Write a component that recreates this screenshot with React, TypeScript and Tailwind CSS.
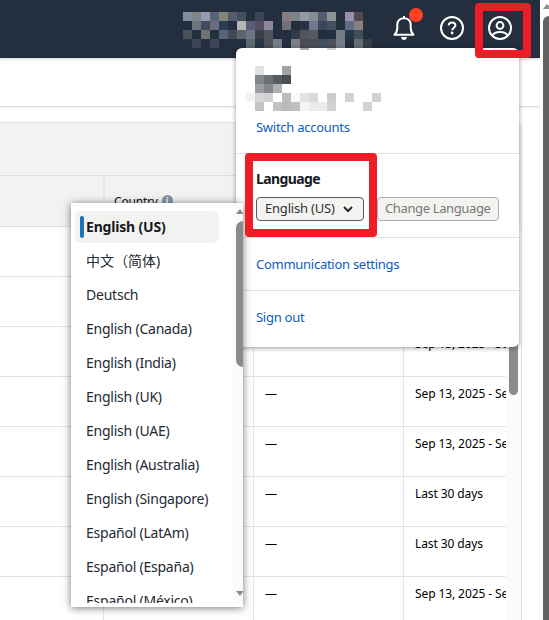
import React from "react";

const _ = "";

// Redacted seller name in the header, 9px cells
const headerMosaic: string[][] = [
  ["#7a909e", "#7d8788", "#9898b0", "#56657a", "#848579", "#565c6b", "#434e5f", _, "#3a4558", _, _, "#857b80", "#7b848b", "#9599a6", "#848d90", "#545c72", "#8c9396", _, "#9690ad", "#514b50", _],
  [_, "#6b757d", "#3f4a5b", "#6b6d80", "#2d3d55", "#262d42", "#b4b8b2", "#595e76", "#534e60", "#8f8599", _, "#746f79", _, "#2a3543", "#717791", "#3a465a", "#445060", _, "#626b86", "#85827f", _],
  ["#4a505a", _, "#6e7270", _, "#566476", "#414856", "#5f636c", "#6a7883", "#3b3f48", "#51545b", _, _, "#333b48", "#53535d", "#575861", _, _, "#727e84", "#26384a", "#434f58", _],
  [_, "#3c4655", _, "#3c4655", _, _, _, "#5d6b70", "#293647", "#4c5057", "#777e89", _, "#7a808a", "#4c4c56", "#4e4e57", "#445161", "#4e505a", "#777e89", _, "#666c75", "#363b45"],
];

const accountMosaic: string[][] = [
  [_, "#dfe1e3", _, _, "#a0a3a8", _, _, _, _, _, _, _, _, _, _],
  [_, "#84878a", "#6c6f73", "#585c62", "#484e55", _, _, _, _, _, _, _, _, _, _],
  [_, "#9a9da2", "#85878b", "#b0b0b4", _, _, _, _, _, _, _, _, _, _, _],
  ["#f2f2f2", "#d6d6d6", "#d1d1d3", _, "#bcbcbf", "#fafafa", "#e3e3e3", "#d9dbdb", _, "#cdcdcd", _, "#d3d3d3", _, _, "#d0d1d1"],
  [_, "#c3c4c7", _, "#c2c3c5", "#b9babd", "#bebfc1", "#f5f5f5", "#eaeaea", "#ececec", "#d1d1d2", _, _, _, "#d2d5d4", _],
];

function Mosaic({ rows }: { rows: string[][] }) {
  return (
    <div>
      {rows.map((row, y) => (
        <div key={y} className="flex">
          {row.map((color, x) => (
            <span key={x} className="size-[9px] shrink-0" style={{ backgroundColor: color || "transparent" }} />
          ))}
        </div>
      ))}
    </div>
  );
}

const languages = [
  "Deutsch",
  "English (Canada)",
  "English (India)",
  "English (UK)",
  "English (UAE)",
  "English (Australia)",
  "English (Singapore)",
  "Español (LatAm)",
  "Español (España)",
  "Español (México)",
];

const rows = ["", "", "Sep 13, 2025 - Sep 13", "Sep 13, 2025 - Sep 13", "Sep 13, 2025 - Sep 13", "Last 30 days", "Last 30 days", "Sep 13, 2025 - Sep 13"];

function Header() {
  return (
    <header className="flex h-[58px] items-start bg-[#232f3e] text-white shadow-[0_1px_3px_#0003]">
      <div className="ml-[183px] mt-3">
        <Mosaic rows={headerMosaic} />
      </div>
      <div className="relative ml-[20px] mt-[14px]">
        <svg width="24" height="28" viewBox="0 0 24 28" fill="none" stroke="currentColor" strokeWidth="2">
          <path d="M12 2v2M2.500 20.800h19c-2.200-2-2.800-3.700-2.800-7.200v-2.800c0-4-2.700-6.600-6.700-6.600s-6.700 2.600-6.700 6.600v2.800c0 3.500-.6 5.200-2.800 7.200Z" strokeLinejoin="round" />
          <path d="M9 23h6c-.3 2-1.400 3-3 3s-2.700-1-3-3Z" fill="currentColor" stroke="none" />
        </svg>
        <span className="absolute -top-[6px] left-[17px] size-[14px] rounded-full bg-[#ff4124]" />
      </div>
      <svg className="ml-[24px] mt-[16px]" width="24" height="24" viewBox="0 0 24 24" fill="none" stroke="currentColor" strokeWidth="2">
        <circle cx="12" cy="12" r="11" />
        <path d="M8.700 9.400C8.900 7.600 10.200 6.600 12 6.600c2 0 3.400 1.100 3.400 2.800 0 2.200-3.200 2.500-3.200 4.900" />
        <circle cx="12.100" cy="17" r="1.400" fill="currentColor" stroke="none" />
      </svg>
      <svg className="ml-[24px] mt-[16px]" width="24" height="24" viewBox="0 0 24 24" fill="none" stroke="currentColor" strokeWidth="2">
        <circle cx="12" cy="12" r="11" />
        <circle cx="12" cy="9.500" r="3.400" />
        <path d="M4.500 19.500c1.200-2.700 3.400-3.600 7.500-3.600s6.300.9 7.500 3.600" />
      </svg>
    </header>
  );
}

function ReportTable() {
  return (
    <main className="flex h-[498px] w-[522px] rounded-tr-md border-r border-t border-[#e4e4e4]">
      <div className="w-[506px] overflow-hidden">
        <div className="h-[53px] border-b border-[#dedede] bg-[#f2f2f2]" />
        <div className="flex h-[51px] border-b border-[#dedede] bg-[#f2f2f2]">
          <div className="w-[105px] border-r-2 border-[#e6e6e6]" />
          <div className="flex items-start gap-1 pl-[9px] pt-[16px] text-[#111]">
            <span className="text-[12px] leading-5 tracking-[-0.2px]">Country</span>
            <span className="mt-[3px] flex size-[11px] items-center justify-center rounded-full bg-[#8794a5] text-[9px] font-bold leading-none text-white">i</span>
          </div>
        </div>
        {rows.map((date, i) => (
          <div key={i} className="flex h-[50px] border-b border-[#e4e4e4] text-[12px] leading-5 text-black">
            <div className="w-[104px] border-r border-[#e4e4e4]" />
            <div className="w-[150px] border-r border-[#e4e4e4]" />
            <div className="w-[150px] border-r border-[#e4e4e4] pl-[11px] pt-[7px]">—</div>
            <div className="w-[102px] overflow-hidden whitespace-nowrap pl-[11px] pt-[7px] tracking-[-0.1px]">{i === 1 ? rows[2] : date}</div>
          </div>
        ))}
      </div>
      <div className="flex-1">
        <div className="h-[104px] bg-[#f0f0f0]" />
        <div className="h-[393px] bg-[#fbfbfb] pl-[3px]">
          <div className="h-[168px] w-[9px] rounded-b-full bg-[#8b8b8b]" />
        </div>
      </div>
    </main>
  );
}

function AccountMenu() {
  return (
    <section className="absolute left-[236px] top-[48px] h-[299px] w-[283px] rounded-md bg-white text-[13px] leading-5 tracking-[-0.27px] shadow-[0_1px_5px_#0006]">
      <div className="h-[106px] border-b border-[#e1e1e1] pl-[10px]">
        <div className="flex h-[18px] gap-[18px] pl-[54px]">
          <span className="h-[2px] w-[9px] bg-[#a8a8ae]" />
          <span className="h-[2px] w-[9px] bg-[#cfcfd2]" />
        </div>
        <Mosaic rows={accountMosaic} />
        <div className="ml-[10px] mt-[6px] text-[#0b5cc5]">Switch accounts</div>
      </div>
      <div className="h-[84px] border-b border-[#e1e1e1] pl-5 pt-[15px] text-[#16191f]">
        <h2 className="text-[14px] font-bold leading-5 tracking-[-0.6px]">Language</h2>
        <div className="mt-[8px] flex gap-[13px]">
          <button className="flex h-6 w-[108px] items-center justify-between rounded border border-[#545b64] bg-[#f4f3f0] pb-[2px] pl-2 pr-[10px] tracking-[-0.2px] text-[#30343a]">
            English (US)
            <svg className="mt-[2px]" width="10" height="8" viewBox="0 0 10 8" fill="none" stroke="#222a33" strokeWidth="2">
              <path d="m1 2 4 4 4-4" />
            </svg>
          </button>
          <button className="flex h-6 w-[122px] items-center whitespace-nowrap rounded border border-[#aaaeae] bg-[#f4f3f0] pb-[2px] pl-[7px] tracking-[-0.37px] text-[#747879]">
            Change Language
          </button>
        </div>
      </div>
      <div className="h-[53px] border-b border-[#e1e1e1] pl-5 pt-[16px] text-[#0b5cc5]">Communication settings</div>
      <div className="pl-5 pt-[16px] text-[#0b5cc5]">Sign out</div>
    </section>
  );
}

function LanguageList() {
  return (
    <section className="absolute left-[71px] top-[203px] flex h-[404px] w-[172px] bg-white shadow-[0_1px_8px_#0008]">
      <ul className="mt-2 h-[392px] w-[162px] overflow-hidden whitespace-nowrap pl-1 text-[14px] leading-5 text-[#232a33]">
        <li className="flex h-8 w-36 items-center gap-[2px] rounded-md bg-[#f2f2f0] pl-[5px] font-bold tracking-[-0.18px] text-[#16191f]">
          <span className="h-[22px] w-1 rounded-full bg-[#1d74b5]" />
          English (US)
        </li>
        <li className="flex h-[34px] items-center pl-[11px] pt-[2px]">中文（简体)</li>
        {languages.map((label) => (
          <li key={label} className="flex h-[34px] items-center pl-[11px] pt-[2px] tracking-[-0.23px]">
            {label}
          </li>
        ))}
      </ul>
      <div className="mb-1 flex w-[10px] flex-col bg-[#fbfbfb] pl-[3px]">
        <svg className="mt-[6px] h-[5px] w-[7px]" viewBox="0 0 7 5"><path d="M0 5 4 0 7 4v1Z" fill="#8b8b8b" /></svg>
        <div className="mt-[7px] h-[146px] w-[7px] rounded-l-full bg-[#8b8b8b]" />
        <svg className="mt-auto mb-[7px] h-[5px] w-[7px]" viewBox="0 0 7 5"><path d="M0 0h7v1L4 5Z" fill="#8b8b8b" /></svg>
      </div>
    </section>
  );
}

export default function App() {
  return (
    <div className="relative flex h-[620px] w-[549px] overflow-hidden bg-white font-['Noto_Sans','Noto_Sans_CJK_SC',sans-serif]">
      <div className="w-[540px]">
        <Header />
        <div className="h-[49px] border-b border-[#dfdfdc] shadow-[0_1px_1px_#0000000c]" />
        <div className="h-[15px]" />
        <ReportTable />
      </div>
      <aside className="flex w-[9px] flex-col bg-[#fcfcfc] pl-[3px]">
        <svg className="mt-1 h-[5px] w-[6px]" viewBox="0 0 6 5"><path d="M0 5 4 0 6 2v3Z" fill="#8b8b8b" /></svg>
        <div className="mt-[7px] flex-1 rounded-tl-md bg-[#636363]" />
      </aside>
      <AccountMenu />
      <LanguageList />
      <div className="absolute left-[475px] top-[3px] h-[55px] w-[56px] rounded border-8 border-[#ee1c25]" />
      <div className="absolute left-[245px] top-[153px] h-[84px] w-[132px] rounded border-8 border-[#ee1c25]" />
    </div>
  );
}
